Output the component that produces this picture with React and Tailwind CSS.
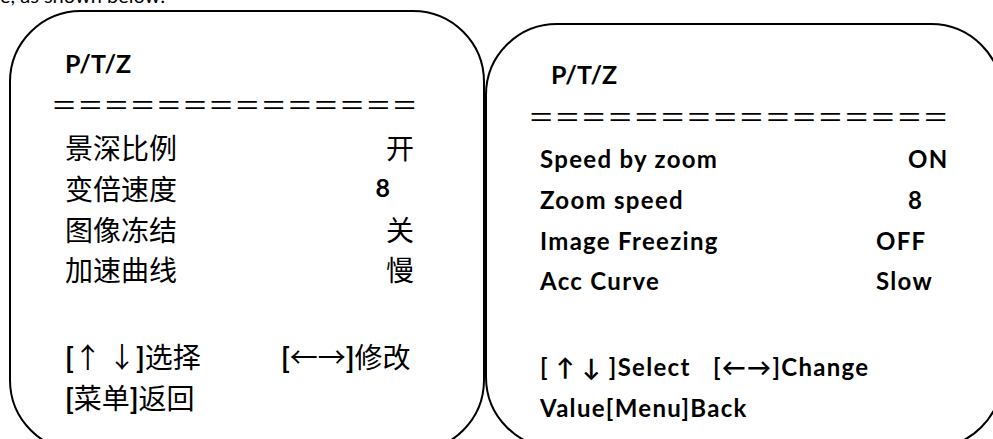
const latin = { fontFamily: 'Lato, "Noto Sans CJK SC", sans-serif' };
const cjk = { fontFamily: '"Noto Sans CJK SC", sans-serif' };

const Row = ({ children, className }) => (
  <div className={`flex items-center ${className}`}>{children}</div>
);

const LeftPanel = () => (
  <div className="mt-[4px] ml-[9px] w-[476px] h-[442px] shrink-0 rounded-[72px] border-2 border-black">
    <div className="pl-[54px] pt-[37px]" style={latin}>
      <div className="h-[28px] leading-[28px] text-[25px] font-bold">P/T/Z</div>
      <div className="mt-[12px] -ml-[14px] h-[30px] leading-[30px] text-[26.2px] whitespace-nowrap" style={cjk}>
        ＝＝＝＝＝＝＝＝＝＝＝＝＝＝
      </div>
      <div className="mt-[7px] w-[349px] text-[28px] font-normal" style={cjk}>
        <Row className="h-[41px] justify-between">
          <span>景深比例</span>
          <span>开</span>
        </Row>
        <Row className="h-[42px] justify-between">
          <span>变倍速度</span>
          <span className="mr-[24px] text-[25px] font-bold" style={latin}>8</span>
        </Row>
        <Row className="h-[40px] justify-between">
          <span>图像冻结</span>
          <span>关</span>
        </Row>
        <Row className="h-[40px] justify-between">
          <span>加速曲线</span>
          <span>慢</span>
        </Row>
        <Row className="mt-[47px] h-[41px] whitespace-nowrap">
          <span className="w-[216px]">
            <b style={latin}>[</b>↑ ↓<b style={latin}>]</b>选择
          </span>
          <span>
            <b style={latin}>[</b>←→<b style={latin}>]</b>修改
          </span>
        </Row>
        <Row className="h-[41px]">
          <span>
            <b style={latin}>[</b>菜单<b style={latin}>]</b>返回
          </span>
        </Row>
      </div>
    </div>
  </div>
);

const RightPanel = () => (
  <div className="mt-[17px] w-[518px] h-[426px] shrink-0 rounded-[72px] border-2 border-black">
    <div className="pl-[53px] pt-[35px] font-bold text-[24px] tracking-[1.3px]" style={latin}>
      <div className="ml-[11px] h-[28px] leading-[28px] text-[25px] tracking-normal">P/T/Z</div>
      <div className="mt-[13px] -ml-[12px] h-[30px] leading-[30px] text-[26.3px] font-normal tracking-normal whitespace-nowrap" style={cjk}>
        ＝＝＝＝＝＝＝＝＝＝＝＝＝＝＝＝
      </div>
      <div className="mt-[8px]">
        <Row className="h-[40px]">
          <span className="w-[368px]">Speed by zoom</span>
          <span>ON</span>
        </Row>
        <Row className="h-[42px]">
          <span className="w-[368px]">Zoom speed</span>
          <span>8</span>
        </Row>
        <Row className="h-[40px]">
          <span className="w-[336px]">Image Freezing</span>
          <span>OFF</span>
        </Row>
        <Row className="h-[40px]">
          <span className="w-[336px]">Acc Curve</span>
          <span>Slow</span>
        </Row>
        <Row className="mt-[45px] h-[41px] whitespace-nowrap">
          <span className="w-[173px]">[ ↑ ↓ ]Select</span>
          <span>[←→]Change</span>
        </Row>
        <Row className="h-[41px]">
          <span>Value[Menu]Back</span>
        </Row>
      </div>
    </div>
  </div>
);

export default function App() {
  return (
    <div className="w-[993px] h-[439px] overflow-hidden bg-white text-black">
      <div className="-mt-[15px] h-[20px] leading-[20px] text-[20px] whitespace-nowrap" style={{ fontFamily: 'Lato, sans-serif' }}>
        e, as shown below:
      </div>
      <div className="mt-[1px] flex items-start">
        <LeftPanel />
        <RightPanel />
      </div>
    </div>
  );
}
